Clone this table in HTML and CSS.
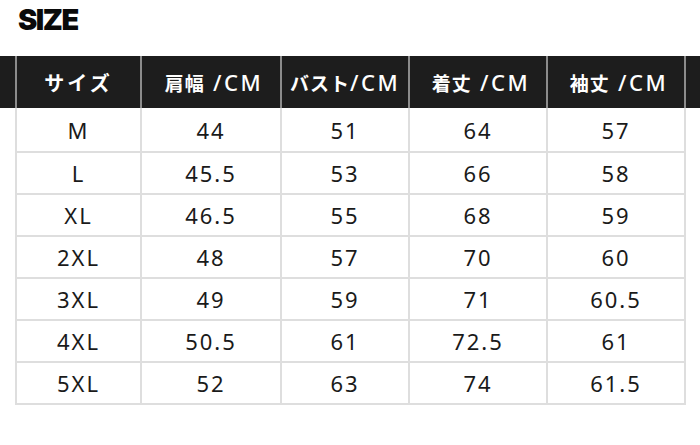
FILE: index.html
```html
<!DOCTYPE html>
<html lang="ja">
<head>
<meta charset="utf-8">
<title>SIZE</title>
<link rel="stylesheet" href="styles.css">
</head>
<body>
<div class="page">
  <h1 class="title">SIZE</h1>
  <div class="table">
    <div class="head-row">
      <div class="edge"></div>
      <div class="hcell c1"><span class="jp">サイズ</span></div>
      <div class="hcell c2"><span class="jp">肩幅</span><span class="unit">&nbsp;/CM</span></div>
      <div class="hcell c3"><span class="jp">バスト</span><span class="unit">/CM</span></div>
      <div class="hcell c4"><span class="jp">着丈</span><span class="unit">&nbsp;/CM</span></div>
      <div class="hcell c5 last"><span class="jp">袖丈</span><span class="unit">&nbsp;/CM</span></div>
    </div>
    <div class="body">
      <div class="row first"><div class="cell c1">M</div><div class="cell c2">44</div><div class="cell c3">51</div><div class="cell c4">64</div><div class="cell c5 last">57</div></div>
      <div class="row"><div class="cell c1">L</div><div class="cell c2">45.5</div><div class="cell c3">53</div><div class="cell c4">66</div><div class="cell c5 last">58</div></div>
      <div class="row"><div class="cell c1">XL</div><div class="cell c2">46.5</div><div class="cell c3">55</div><div class="cell c4">68</div><div class="cell c5 last">59</div></div>
      <div class="row"><div class="cell c1">2XL</div><div class="cell c2">48</div><div class="cell c3">57</div><div class="cell c4">70</div><div class="cell c5 last">60</div></div>
      <div class="row"><div class="cell c1">3XL</div><div class="cell c2">49</div><div class="cell c3">59</div><div class="cell c4">71</div><div class="cell c5 last">60.5</div></div>
      <div class="row"><div class="cell c1">4XL</div><div class="cell c2">50.5</div><div class="cell c3">61</div><div class="cell c4">72.5</div><div class="cell c5 last">61</div></div>
      <div class="row"><div class="cell c1">5XL</div><div class="cell c2">52</div><div class="cell c3">63</div><div class="cell c4">74</div><div class="cell c5 last">61.5</div></div>
    </div>
  </div>
</div>
</body>
</html>
```
FILE: styles.css
```css
html, body {
  margin: 0;
  padding: 0;
  background: #ffffff;
}
.page {
  width: 700px;
  height: 445px;
  overflow: hidden;
}
.title {
  margin: 0;
  height: 56px;
  padding: 2px 0 0 18px;
  box-sizing: border-box;
  font-family: Inter, "Liberation Sans", sans-serif;
  font-weight: 900;
  font-size: 29px;
  line-height: 36px;
  letter-spacing: -1.5px;
  color: #0a0a0a;
}
.head-row {
  display: flex;
  height: 52px;
  background: #1d1d1d;
}
.edge {
  width: 15px;
  flex: none;
}
.hcell {
  display: flex;
  align-items: center;
  justify-content: center;
  box-sizing: border-box;
  border-left: 2px solid #8c8c8c;
  color: #ffffff;
  flex: none;
}
.hcell.last {
  border-right: 2px solid #8c8c8c;
}
.c1 { width: 125px; }
.c2 { width: 140px; }
.c3 { width: 128px; }
.c4 { width: 138px; }
.c5 { width: 138px; }
.c5.last { width: 140px; }
.c2, .c4, .c5 { padding-left: 6px; }
.jp {
  font-family: "Noto Sans CJK JP", sans-serif;
  font-weight: 700;
  font-size: 19px;
  letter-spacing: 1px;
}
.c1 .jp {
  font-size: 20px;
  letter-spacing: 3px;
}
.unit {
  font-family: "Noto Sans", "Noto Sans CJK JP", sans-serif;
  font-weight: 500;
  font-size: 22px;
  letter-spacing: 2.5px;
}
.body {
  padding-left: 15px;
}
.row {
  display: flex;
  height: 42px;
}
.row.first {
  height: 45px;
}
.cell {
  display: flex;
  align-items: center;
  justify-content: center;
  box-sizing: border-box;
  flex: none;
  padding-left: 0;
  border-left: 2px solid #dedede;
  border-bottom: 2px solid #dedede;
  font-family: "Noto Sans", sans-serif;
  font-size: 22px;
  letter-spacing: 2px;
  color: #1a1a1a;
}
.cell.last {
  border-right: 2px solid #dedede;
}
```
